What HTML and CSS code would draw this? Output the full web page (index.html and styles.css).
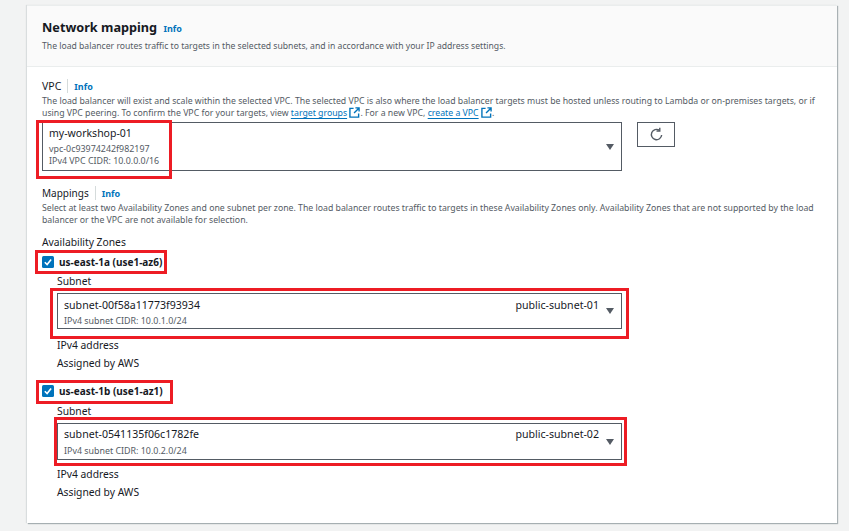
FILE: index.html
```html
<!DOCTYPE html>
<html lang="en">
<head>
  <meta charset="UTF-8" />
  <title>Network mapping</title>
  <link rel="stylesheet" href="styles.css">
</head>
<body>
  <div class="card">
    <!-- Header -->
    <div class="card-head">
      <h2>Network mapping <a class="info" href="#">Info</a></h2>
      <p class="hint">The load balancer routes traffic to targets in the selected subnets, and in accordance with your IP address settings.</p>
    </div>

    <div class="card-body">
      <!-- VPC -->
      <div class="label-row"><span>VPC</span><a class="info" href="#">Info</a></div>
      <p class="hint desc">The load balancer will exist and scale within the selected VPC. The selected VPC is also where the load balancer targets must be hosted unless routing to Lambda or on-premises targets, or if using VPC peering. To confirm the VPC for your targets, view <a class="link" href="#">target groups</a> <svg class="ext" viewBox="0 0 12 12"><path d="M5 1.500H1v9.500h9.500V7" /><path d="M7 1h4v4M11 1L5.500 6.500" /></svg>. For a new VPC, <a class="link" href="#">create a VPC</a> <svg class="ext" viewBox="0 0 12 12"><path d="M5 1.500H1v9.500h9.500V7" /><path d="M7 1h4v4M11 1L5.500 6.500" /></svg>.</p>

      <div class="vpc-row">
        <div class="select vpc-select">
          <div class="value">my-workshop-01</div>
          <div class="sub">vpc-0c93974242f982197</div>
          <div class="sub">IPv4 VPC CIDR: 10.0.0.0/16</div>
          <span class="caret"></span>
        </div>
        <button class="refresh">
          <svg viewBox="0 0 16 16"><path d="M13.500 8.500A5.500 5.500 0 1 1 11 3.400" /><path d="M11.500 0.800V4.300H8" /></svg>
        </button>
      </div>

      <!-- Mappings -->
      <div class="label-row mappings"><span>Mappings</span><a class="info" href="#">Info</a></div>
      <p class="hint desc">Select at least two Availability Zones and one subnet per zone. The load balancer routes traffic to targets in these Availability Zones only. Availability Zones that are not supported by the load balancer or the VPC are not available for selection.</p>
      <div class="az-title">Availability Zones</div>

      <div class="zone">
        <label class="check">
          <svg class="box" viewBox="0 0 12 12"><rect width="12" height="12" rx="1.500" /><path d="M2.800 6.200l2.300 2.300 4-5" /></svg>
          us-east-1a (use1-az6)
        </label>
        <div class="zone-body">
          <div class="field">Subnet</div>
          <div class="select subnet-select">
            <div class="subnet-top"><span>subnet-00f58a11773f93934</span><span>public-subnet-01</span></div>
            <div class="sub">IPv4 subnet CIDR: 10.0.1.0/24</div>
            <span class="caret"></span>
          </div>
          <div class="field ip">IPv4 address</div>
          <div class="field assigned">Assigned by AWS</div>
        </div>
      </div>

      <div class="zone second">
        <label class="check">
          <svg class="box" viewBox="0 0 12 12"><rect width="12" height="12" rx="1.500" /><path d="M2.800 6.200l2.300 2.300 4-5" /></svg>
          us-east-1b (use1-az1)
        </label>
        <div class="zone-body">
          <div class="field">Subnet</div>
          <div class="select subnet-select">
            <div class="subnet-top"><span>subnet-0541135f06c1782fe</span><span>public-subnet-02</span></div>
            <div class="sub">IPv4 subnet CIDR: 10.0.2.0/24</div>
            <span class="caret"></span>
          </div>
          <div class="field ip">IPv4 address</div>
          <div class="field assigned">Assigned by AWS</div>
        </div>
      </div>
    </div>
  </div>

  <!-- Red annotation boxes drawn over the screenshot -->
  <div class="mark mark-vpc"></div>
  <div class="mark mark-az1"></div>
  <div class="mark mark-subnet1"></div>
  <div class="mark mark-az2"></div>
  <div class="mark mark-subnet2"></div>
</body>
</html>
```

FILE: styles.css
```css
html, body {
  height: 100%;
}
body {
  margin: 0;
  padding: 5px 12px 0 27px;
  box-sizing: border-box;
  position: relative;
  overflow: hidden;
  background: #f2f3f3;
  color: #16191f;
  font-family: "Noto Sans", "Open Sans", sans-serif;
  font-size: 10.300px;
}
.card {
  height: 518px;
  box-sizing: border-box;
  background: #fff;
  border-top: 1px solid #eaeded;
  box-shadow: 1px 1px 1px 0 rgba(0,28,36,0.3), -1px 0 1px 0 rgba(0,28,36,0.1);
}
.card-head {
  height: 61px;
  box-sizing: border-box;
  padding: 11px 15px 0;
  background: #fafafa;
  border-bottom: 1px solid #eaeded;
}
h2 {
  margin: 0;
  font-size: 12.700px;
  line-height: 20px;
  font-weight: 700;
}
.info {
  color: #0073bb;
  font-size: 9px;
  font-weight: 700;
  text-decoration: none;
}
h2 .info {
  margin-left: 3px;
}
.hint {
  margin: 0;
  color: #545b64;
  font-size: 8.630px;
  line-height: 12px;
}
.card-head .hint {
  margin-top: 1px;
}
.card-body {
  padding: 12px 15px 0;
}
.label-row {
  display: flex;
  align-items: center;
  height: 14px;
  font-size: 10.500px;
}
.label-row span {
  padding-right: 6px;
  margin-right: 6px;
  border-right: 1px solid #d5dbdb;
}
.hint.desc {
  margin-top: 2px;
  font-size: 8.720px;
}
.link {
  color: #0073bb;
  text-decoration: underline;
  text-underline-offset: 2px;
}
.ext {
  width: 11px;
  height: 11px;
  vertical-align: -2px;
  fill: none;
  stroke: #0073bb;
  stroke-width: 1.500;
}
.vpc-row {
  display: flex;
  align-items: flex-start;
  gap: 15px;
  margin-top: 3px;
}
.select {
  position: relative;
  box-sizing: border-box;
  border: 1px solid #545b64;
  background: #fff;
}
.vpc-select {
  width: 580px;
  height: 49px;
  padding: 3px 6px;
}
.value {
  font-size: 10.500px;
  line-height: 14px;
}
.sub {
  color: #545b64;
  font-size: 8.900px;
  line-height: 12px;
}
.vpc-select .value {
  margin-bottom: 3px;
}
.caret {
  position: absolute;
  right: 7px;
  top: 50%;
  margin-top: -3px;
  border-style: solid;
  border-width: 6px 4px 0;
  border-color: #545b64 transparent transparent;
}
.refresh {
  width: 38px;
  height: 25px;
  padding: 0;
  border: 1px solid #545b64;
  background: #fff;
  display: flex;
  align-items: center;
  justify-content: center;
}
.refresh svg {
  width: 15px;
  height: 15px;
  fill: none;
  stroke: #545b64;
  stroke-width: 1.500;
}
.mappings {
  margin-top: 15px;
}
.mappings span {
  font-size: 10px;
}
.az-title {
  margin-top: 9px;
  line-height: 14px;
}
.check {
  display: flex;
  align-items: center;
  gap: 5px;
  height: 14px;
  margin-top: 6px;
  font-weight: 700;
  font-size: 10px;
}
.box {
  width: 12px;
  height: 12px;
  flex: none;
}
.box rect {
  fill: #0073bb;
}
.box path {
  fill: none;
  stroke: #fff;
  stroke-width: 1.600;
}
.zone-body {
  padding-left: 15px;
}
.field {
  margin-top: 5px;
  line-height: 14px;
}
.subnet-select {
  width: 565px;
  height: 36px;
  margin-top: 5px;
  padding: 3px 6px;
}
.subnet-top {
  display: flex;
  justify-content: space-between;
  padding-right: 16px;
  line-height: 16px;
  font-size: 10.600px;
}
.subnet-select .sub {
  margin-top: 2px;
}
.field.ip {
  margin-top: 9px;
}
.field.assigned {
  margin-top: 4px;
}
.second {
  margin-top: 14px;
}
.second .field:first-child {
  margin-top: 6px;
}
.second .subnet-select {
  height: 37px;
  padding-top: 2px;
}
.second .subnet-select .sub {
  margin-top: 3px;
}
.second .field.ip {
  margin-top: 7px;
}
.mark {
  position: absolute;
  box-sizing: border-box;
  border: 3px solid #ed1c24;
}
.mark-vpc {
  left: 36px;
  top: 120px;
  width: 136px;
  height: 59px;
}
.mark-az1 {
  left: 35px;
  top: 250px;
  width: 132px;
  height: 24px;
}
.mark-subnet1 {
  left: 50px;
  top: 288px;
  width: 579px;
  height: 51px;
}
.mark-az2 {
  left: 36px;
  top: 380px;
  width: 137px;
  height: 24px;
}
.mark-subnet2 {
  left: 54px;
  top: 417px;
  width: 573px;
  height: 49px;
}
```
